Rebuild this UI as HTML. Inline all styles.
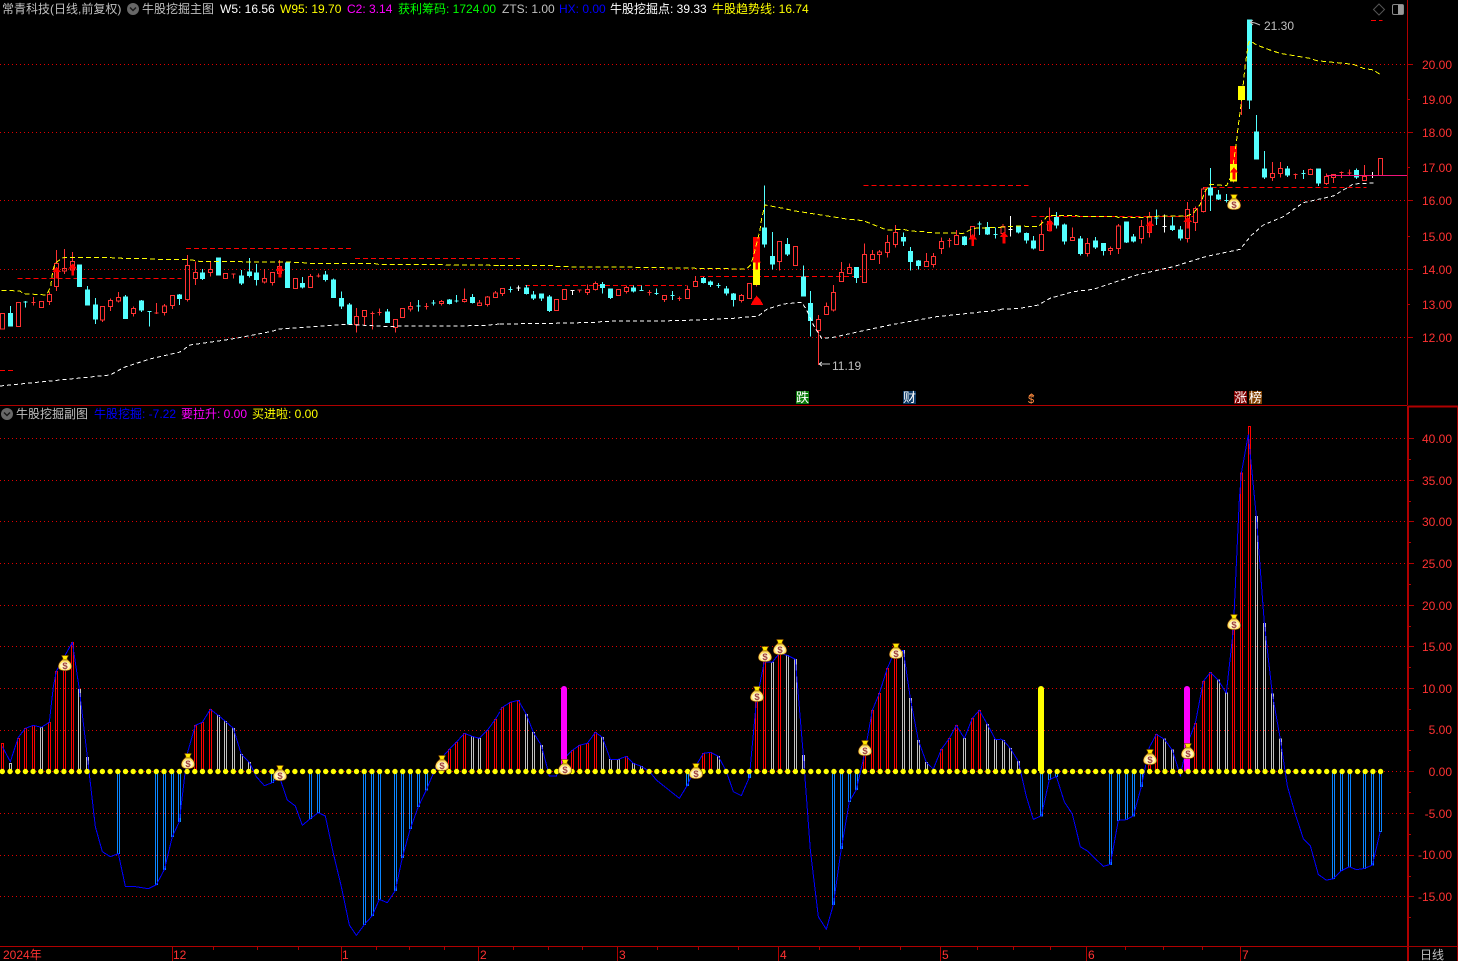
<!DOCTYPE html>
<html><head><meta charset="utf-8"><title>牛股挖掘</title>
<style>
html,body{margin:0;padding:0;background:#000;width:1458px;height:961px;overflow:hidden}
svg{position:absolute;left:0;top:0;display:block}
text{font-family:"Liberation Sans","WenQuanYi Zen Hei","Noto Sans CJK SC",sans-serif;font-size:12px}
.k path,.k polyline,.k line{vector-effect:non-scaling-stroke;stroke-width:1;shape-rendering:crispEdges}
.r{stroke:#ff3232;fill:none}
.c{stroke:#54ffff;fill:#54ffff}
.w{stroke:#fff;fill:#fff}
.y{stroke:#ffff00;fill:none;stroke-dasharray:5 3}
.v{stroke:#fff;fill:none;stroke-dasharray:4 3}
.d{stroke:#f00;fill:none;stroke-dasharray:5 3}
.l{stroke:#0000ff;fill:none}
.br{stroke:#f00;fill:none}
.bw{stroke:#c0c0c0;fill:none}
.bb{stroke:#0a84ff;fill:none}
.g line{stroke:#e00000;stroke-width:1;stroke-dasharray:1 3;shape-rendering:crispEdges}
.t{fill:#ff3232}
</style></head>
<body>
<svg width="1458" height="961" viewBox="0 0 1458 961" xmlns="http://www.w3.org/2000/svg">
<defs>
<symbol id="b" viewBox="0 0 14 16">
<path d="M3.500 .5h7L9 3.500l1 1.500H4l1-1.500z" fill="#ffe800" stroke="#6a3000" stroke-width=".6"/>
<path d="M4 5C1.500 7 .3 9.500 .3 11.500c0 3 3 4.200 6.700 4.200s6.700-1.200 6.700-4.200c0-2-1.200-4.500-3.700-6.500z" fill="#ffe060" stroke="#6a3000" stroke-width=".6"/>
<ellipse cx="7" cy="10.800" rx="5" ry="4" fill="#fff6c0"/>
<text x="7" y="14" text-anchor="middle" style="font-size:9.500px;font-weight:bold" fill="#a04040">$</text>
</symbol>
</defs>

<!-- grid -->
<g class="g">
<line x1="0" x2="1407" y1="64.500" y2="64.500"/><line x1="0" x2="1407" y1="132.500" y2="132.500"/><line x1="0" x2="1407" y1="200.500" y2="200.500"/><line x1="0" x2="1407" y1="269.500" y2="269.500"/><line x1="0" x2="1407" y1="337.500" y2="337.500"/>
<line x1="0" x2="1407" y1="438.500" y2="438.500"/><line x1="0" x2="1407" y1="480.500" y2="480.500"/><line x1="0" x2="1407" y1="521.500" y2="521.500"/><line x1="0" x2="1407" y1="563.500" y2="563.500"/><line x1="0" x2="1407" y1="605.500" y2="605.500"/><line x1="0" x2="1407" y1="646.500" y2="646.500"/><line x1="0" x2="1407" y1="688.500" y2="688.500"/><line x1="0" x2="1407" y1="730.500" y2="730.500"/><line x1="0" x2="1407" y1="771.500" y2="771.500"/><line x1="0" x2="1407" y1="813.500" y2="813.500"/><line x1="0" x2="1407" y1="855.500" y2="855.500"/><line x1="0" x2="1407" y1="896.500" y2="896.500"/>
</g>

<!-- main chart, left -->
<g class="k" transform="scale(.33333)">
<path class="d" d="M52 835H545M558 745H1055M1065 775H1500M0 1112H40"/>
<path class="r" d="M1 940h12V987h-12zM49 907h12V980h-12zM100 891V917M94 907h12M118 904h12V922h-12zM142 883h12V905h-12zM148 875V883M148 905V915M163 790h12V860h-12zM169 750V790M169 860V873M187 805h12V813h-12zM193 747V805M193 813V822M211 785h12V810h-12zM217 756V785M217 810V825M301 919h12V960h-12zM307 960V966M325 901h12V920h-12zM331 895V901M331 920V933M349 892h12V903h-12zM355 876V892M355 903V908M394 925h12V941h-12zM400 920V925M400 941V950M463 939h12M469 909V942M487 918h12V938h-12zM493 912V918M493 938V947M511 886h12V917h-12zM517 917V927M556 796h12V899h-12zM562 765V796M562 899V905M580 817h12V836h-12zM586 785V817M586 836V855M625 808h12V818h-12zM631 783V808M631 818V830M670 820h12V835h-12zM694 822h12M700 822V836M787 835h12V846h-12zM793 807V835M793 846V850M811 817h12V848h-12zM817 848V857M832 800h12V820h-12zM838 780V800M880 835h12V865h-12zM925 829h12V862h-12zM931 822V829M949 828h12M955 821V833M1063 949h12V974h-12zM1069 924V949M1069 974V998M1087 931h12V949h-12zM1093 949V975M1111 941h12M1117 934V988M1132 938h12M1138 925V947M1180 958h12V982h-12zM1186 982V998M1201 925h12V952h-12zM1225 919h12V927h-12zM1231 906V919M1231 927V935M1273 920h12M1279 909V929M1318 904h12V911h-12zM1324 900V904M1324 911V917M1387 898h12V904h-12zM1393 865V898M1393 904V908M1432 909h12V916h-12zM1438 900V909M1456 891h12V914h-12zM1462 888V891M1462 914V920M1480 879h12V892h-12zM1486 873V879"/>
<path class="c" d="M25 940h12V978h-12zM31 918V940M70 906h12M76 903V923M232 795h12V860h-12zM256 870h12V915h-12zM262 858V870M280 915h12V957h-12zM286 894V915M286 957V972M370 891h12V955h-12zM376 885V891M376 955V957M418 903h12V930h-12zM424 900V903M424 930V936M442 935h12M448 935V980M532 885h12V896h-12zM538 882V885M538 896V915M601 819h12V836h-12zM607 807V819M607 836V840M649 774h12V825h-12zM718 828h12V849h-12zM724 810V828M724 849V855M742 816h12V827h-12zM748 774V816M748 827V833M763 819h12V839h-12zM769 792V819M769 839V857M856 789h12V863h-12zM901 850h12V861h-12zM907 831V850M907 861V866M970 825h12V839h-12zM976 813V825M976 839V845M994 840h12V893h-12zM1000 835V840M1018 895h12V918h-12zM1024 874V895M1024 918V927M1042 915h12V972h-12zM1048 909V915M1156 936h12V968h-12zM1162 927V936M1249 918h12M1255 900V935M1294 909h12M1300 900V917M1342 900h12V911h-12zM1348 897V900M1348 911V914M1363 903h12M1369 885V908M1411 892h12V908h-12zM1417 882V892M1417 908V911"/>
<polyline class="y" points="5,871 60,873 70,881 140,885 152,860 158,815 165,790 185,775 195,772 310,772 370,775 440,776 470,778 560,778 590,782 600,785 700,785 900,787 925,790 1125,791 1135,793 1450,795 1500,797"/>
<polyline class="v" points="0,1158 90,1149 180,1140 270,1131 330,1125 375,1101 450,1077 540,1056 570,1035 690,1018 760,1005 820,993 835,987 1040,973 1150,979 1445,977 1500,972"/>
<path fill="#f00" d="M170 800l13 16h-9v20h-8v-20h-9zM218 790l13 16h-9v20h-8v-20h-9zM840 797l13 16h-9v20h-8v-20h-9z"/>
</g>

<!-- main chart, middle -->
<g class="k" transform="translate(500 0) scale(.33333)">
<path class="d" d="M75 856H560M600 830H1085M1090 556H1500M0 775H60"/>
<path class="r" d="M1 866h12V880h-12zM7 880V888M163 898h12V932h-12zM187 868h12V899h-12zM232 870h12M238 870V878M256 868h12V878h-12zM262 853V868M262 878V885M280 850h12V868h-12zM286 844V850M286 868V872M349 868h12V886h-12zM373 862h12V875h-12zM379 856V862M379 875V880M442 877h12M448 870V886M487 887h12V899h-12zM493 899V906M532 896h12M538 889V903M556 868h12V895h-12zM562 856V868M580 844h12V859h-12zM586 828V844M718 887h12V901h-12zM724 882V887M724 901V907M742 850h12V895h-12zM769 855V860M832 725h12V785h-12zM838 785V812M880 740h12V796h-12zM949 959h12V992h-12zM955 945V959M955 992V1095M973 920h12V944h-12zM979 907V920M994 877h12V930h-12zM1000 855V877M1000 930V935M1018 818h12V845h-12zM1024 786V818M1042 803h12V821h-12zM1048 790V803M1087 764h12V848h-12zM1093 730V764M1111 763h12V778h-12zM1117 750V763M1132 756h12V763h-12zM1138 750V756M1138 763V792M1156 727h12V757h-12zM1162 705V727M1162 757V772M1180 697h12V734h-12zM1186 675V697M1186 734V742M1273 785h12V800h-12zM1279 759V785M1294 769h12V794h-12zM1300 759V769M1300 794V803M1318 724h12V745h-12zM1324 712V724M1324 745V762M1342 722h12M1348 714V743M1363 706h12V734h-12zM1369 690V706M1411 680h12V710h-12z"/>
<path class="c" d="M25 868h12M31 860V878M73 864h12V881h-12zM79 855V864M79 881V884M94 885h12V894h-12zM100 873V885M100 894V900M118 882h12V894h-12zM124 894V903M142 891h12V932h-12zM148 885V891M148 932V936M301 853h12V863h-12zM307 846V853M307 863V881M325 867h12V893h-12zM331 865V867M331 893V897M394 864h12V873h-12zM400 857V864M400 873V878M418 872h12M424 856V873M463 880h12M469 865V885M511 886h12M517 873V900M604 835h12V848h-12zM610 831V835M610 848V851M625 846h12V854h-12zM631 841V846M631 854V861M649 857h12M655 849V864M673 867h12V879h-12zM679 858V867M679 879V887M694 882h12V899h-12zM700 879V882M700 899V920M787 684h12V732h-12zM793 556V684M793 732V743M811 769h12V792h-12zM817 696V769M817 792V809M856 733h12V762h-12zM862 714V733M862 762V768M904 831h12V888h-12zM910 796V831M925 910h12V962h-12zM931 873V910M931 962V1010M1063 802h12V832h-12zM1069 832V849M1204 712h12V723h-12zM1210 697V712M1210 723V738M1225 754h12V785h-12zM1231 741V754M1231 785V812M1249 783h12V797h-12zM1255 780V783M1255 797V809M1387 711h12V733h-12zM1393 708V711M1393 733V737M1432 672h12M1438 664V705M1456 683h12V702h-12zM1462 666V683M1462 702V705M1480 704h12M1486 683V716"/>
<path class="w" d="M49 864h12M55 857V873M211 871h12M217 871V885"/>
<path fill="#f00" d="M759 711h21v74h-21z"/>
<path fill="#ff0" d="M759 785h21v70h-21z"/>
<polyline class="y" points="0,797 160,797 165,800 350,801 600,805 740,807 752,795 760,770 780,690 785,655 795,615 850,625 880,632 1040,657 1090,662 1130,678 1160,690 1210,688 1230,693 1270,695 1290,698 1390,700 1420,685 1500,682"/>
<polyline class="v" points="0,972 160,970 290,967 310,964 540,962 700,955 775,948 800,928 850,912 905,907 920,930 940,975 965,1015 1000,1012 1090,992 1170,975 1310,950 1500,930"/>
<path fill="#f00" d="M770 772l14 16h-10v20h-8v-20h-10zM1418 702l13 16h-9v20h-8v-20h-9zM770 887l10 10 10 18h-38l10-18z"/>
</g>

<!-- main chart, right -->
<g class="k" transform="translate(1000 0) scale(.33333)">
<path class="d" d="M0 556H85M95 650H580M610 562H1100M1113 61H1147"/>
<path class="r" d="M3 680h12V700h-12zM9 672V680M118 703h12V752h-12zM124 660V703M142 665h12V692h-12zM148 622V665M211 712h12V722h-12zM217 682V712M256 730h12V761h-12zM262 714V730M262 761V770M325 745h12V751h-12zM331 739V745M331 751V765M349 678h12V745h-12zM355 672V678M355 745V762M418 679h12V716h-12zM424 660V679M424 716V731M442 650h12V697h-12zM448 636V650M448 697V713M556 628h12V716h-12zM562 606V628M562 716V728M580 625h12V668h-12zM586 620V625M586 668V693M604 567h12V635h-12zM610 561V567M610 635V638M724 300V345M700 545V548M811 520h12V533h-12zM817 486V520M817 533V543M835 505h12V521h-12zM841 486V505M841 521V533M880 524h12M886 520V537M925 508h12V523h-12zM931 505V508M973 529h12V551h-12zM979 520V529M979 551V555M994 524h12V533h-12zM1000 533V549M1018 517h12M1024 515V534M1042 519h12M1048 508V527M1087 530h12V542h-12zM1093 495V530M1135 475h12V526h-12z"/>
<path class="c" d="M49 678h12V696h-12zM55 676V678M55 696V701M73 700h12V720h-12zM79 697V700M79 720V731M94 723h12V744h-12zM100 708V723M100 744V749M163 652h12V675h-12zM169 636V652M169 675V686M187 675h12V723h-12zM193 670V675M193 723V734M235 717h12V760h-12zM241 708V717M241 760V767M280 723h12V741h-12zM286 711V723M286 741V747M304 730h12V752h-12zM310 752V767M373 666h12V726h-12zM379 726V729M394 711h12V723h-12zM400 702V711M400 723V728M463 654h12M469 628V675M511 678h12V688h-12zM517 651V678M517 688V693M535 690h12V714h-12zM541 678V690M541 714V722M625 564h12V585h-12zM631 504V564M631 585V633M649 585h12V597h-12zM655 570V585M655 597V600M673 601h12M679 582V608M763 396h12V477h-12zM769 345V396M787 507h12V531h-12zM793 453V507M793 531V537M856 507h12V525h-12zM862 498V507M862 525V531M904 520h12M910 510V537M949 507h12V549h-12zM955 505V507M955 549V558M1063 511h12V531h-12zM1069 505V511M1069 531V537"/>
<path class="w" d="M25 688h12M31 648V710M487 679h12M493 643V697M1117 516V534"/>
<path fill="#f00" d="M690 438h21v54h-21z"/>
<path fill="#ff0" d="M690 492h21v53h-21zM714 258h21v42h-21z"/>
<path class="c" d="M742 60h12V300h-12zM748 300V327"/>
<polyline class="y" points="0,682 50,678 115,680 130,665 140,650 155,646 230,647 240,650 350,650 355,653 440,652 480,648 560,648 580,640 600,615 615,575 630,553 680,557 695,525 710,420 715,375 725,300 735,200 745,130 750,122 770,135 810,150 840,160 930,175 950,182 1060,193 1090,205 1120,210 1140,223"/>
<polyline class="v" points="0,928 60,925 115,915 150,895 220,875 280,868 340,848 410,825 520,800 610,772 625,768 720,748 755,705 790,675 850,650 910,608 1000,588 1060,552 1130,548"/>
<path stroke="#f0147a" fill="none" d="M980 526H1222"/>
<path fill="#f00" d="M12 695l13 16h-9v20h-8v-20h-9zM150 658l13 16h-9v20h-8v-20h-9zM450 662l13 16h-9v20h-8v-20h-9zM563 650l13 16h-9v20h-8v-20h-9zM702 502l13 16h-9v20h-8v-20h-9z"/>
</g>

<!-- sub chart left -->
<g class="k" transform="translate(0 630) scale(.33333)">
<path class="br" d="M4 424V340h6V424M52 424V325h6V424M73 424V295h6V424M97 424V286h6V424M145 424V277h6V424M166 424V124h6V424M190 424V115h6V424M214 424V37h6V424M583 424V286h6V424M604 424V277h6V424M628 424V238h6V424M1345 424V358h6V424M1366 424V337h6V424M1390 424V310h6V424M1459 424V301h6V424M1483 424V268h6V424"/>
<path class="bw" d="M28 424V400h6V424M121 424V292h6V424M235 424V178h6V424M259 424V382h6V424M652 424V256h6V424M673 424V274h6V424M697 424V295h6V424M721 424V373h6V424M745 424V397h6V424M1414 424V319h6V424M1435 424V325h6V424"/>
<path class="bb" d="M352 428V671h6V428M466 428V764h6V428M490 428V719h6V428M514 428V620h6V428M535 428V575h6V428M814 428V458h6V428M928 428V566h6V428M952 428V548h6V428M1090 428V884h6V428M1114 428V857h6V428M1135 428V808h6V428M1183 428V782h6V428M1204 428V683h6V428M1228 428V596h6V428M1252 428V530h6V428M1276 428V480h6V428"/>
<polyline class="l" points="7,350 31,395 55,322 76,295 100,286 124,292 148,277 160,170 169,124 193,80 217,37 238,178 262,380 286,590 307,665 331,680 355,671 376,769 400,769 445,776 469,764 493,719 517,620 538,575 562,370 586,286 607,277 631,238 655,256 676,274 700,295 724,373 748,397 769,440 793,467 817,458 838,440 862,510 886,528 907,586 931,566 955,548 976,558 1000,670 1024,770 1048,885 1069,916 1093,884 1117,857 1138,808 1162,818 1186,782 1207,683 1231,596 1255,530 1279,480 1300,430 1324,385 1348,358 1369,337 1393,310 1417,319 1438,325 1462,301 1486,268 1500,245"/>
</g>

<!-- sub chart middle -->
<g class="k" transform="translate(500 630) scale(.33333)">
<path class="br" d="M4 424V232h6V424M28 424V217h6V424M52 424V211h6V424M214 424V361h6V424M235 424V346h6V424M259 424V340h6V424M283 424V307h6V424M376 424V379h6V424M607 424V370h6V424M628 424V367h6V424M766 424V215h6V424M790 424V95h6V424M835 424V70h6V424M1090 424V375h6V424M1114 424V241h6V424M1135 424V190h6V424M1159 424V115h6V424M1183 424V70h6V424M1321 424V358h6V424M1345 424V325h6V424M1366 424V286h6V424M1414 424V265h6V424M1435 424V241h6V424"/>
<path class="bw" d="M76 424V253h6V424M97 424V307h6V424M121 424V346h6V424M304 424V322h6V424M328 424V388h6V424M352 424V388h6V424M397 424V400h6V424M421 424V409h6V424M652 424V379h6V424M814 424V97h6V424M859 424V76h6V424M883 424V88h6V424M907 424V376h6V424M1207 424V62h6V424M1228 424V205h6V424M1252 424V331h6V424M1276 424V397h6V424M1390 424V325h6V424M1459 424V283h6V424M1483 424V328h6V424"/>
<path class="bb" d="M559 428V466h6V428M745 428V442h6V428M997 428V824h6V428M1021 428V656h6V428M1045 428V515h6V428M1066 428V479h6V428"/>
<polyline class="l" points="0,240 7,232 31,217 55,211 79,253 100,307 124,346 148,438 169,438 193,385 217,361 238,346 262,340 286,307 307,322 331,388 355,388 379,379 400,400 424,409 448,424 469,450 538,505 562,466 586,410 610,370 631,367 655,379 679,424 700,485 724,497 748,442 769,215 793,95 817,97 838,70 862,76 886,88 910,376 931,660 955,860 979,898 1000,824 1024,656 1048,515 1069,479 1093,375 1117,241 1138,190 1162,115 1186,60 1210,62 1231,205 1255,331 1279,397 1300,417 1324,358 1348,325 1369,286 1393,325 1417,265 1438,241 1462,283 1486,328 1500,328"/>
</g>
<path d="M561 771V689a3 3 0 0 1 6 0V771z" fill="#f0f"/>

<!-- sub chart right -->
<g class="k" transform="translate(1000 410) scale(.33333 .35137)">
<path class="br" d="M445 1028V1010h6V1028M466 1028V923h6V1028M583 1028V892h6V1028M607 1028V772h6V1028M628 1028V747h6V1028M697 1028V625h6V1028M721 1028V179h6V1028M745 1028V47h6V1028"/>
<path class="bw" d="M7 1028V940h6V1028M28 1028V963h6V1028M52 1028V1000h6V1028M490 1028V937h6V1028M514 1028V968h6V1028M652 1028V769h6V1028M676 1028V806h6V1028M766 1028V303h6V1028M790 1028V607h6V1028M814 1028V808h6V1028M838 1028V937h6V1028"/>
<path class="bb" d="M121 1032V1155h6V1032M145 1032V1052h6V1032M166 1032V1043h6V1032M328 1032V1293h6V1032M352 1032V1168h6V1032M376 1032V1166h6V1032M397 1032V1155h6V1032M421 1032V1072h6V1032M997 1032V1334h6V1032M1021 1032V1311h6V1032M1045 1032V1300h6V1032M1090 1032V1305h6V1032M1114 1032V1295h6V1032M1138 1032V1199h6V1032"/>
<polyline class="l" points="0,936 10,940 31,963 55,1000 79,1100 100,1165 124,1155 148,1052 169,1043 193,1115 217,1150 241,1243 262,1255 310,1299 331,1293 355,1168 379,1166 400,1155 424,1072 448,960 469,923 493,937 517,968 541,1040 562,950 586,892 610,772 631,747 655,769 679,806 700,625 718,255 724,180 745,70 769,303 793,607 817,808 841,937 862,1070 886,1150 910,1220 931,1240 955,1322 979,1338 1000,1334 1024,1311 1048,1300 1069,1308 1093,1305 1117,1295 1141,1199"/>
</g>
<path d="M1038 771V689a3 3 0 0 1 6 0V771z" fill="#ff0"/>
<path d="M1184 771V689a3 3 0 0 1 6 0V771z" fill="#f0f"/>

<!-- zero-line dots -->
<line x1="2.300" x2="1381" y1="771.500" y2="771.500" stroke="#ff0" stroke-width="5.400" stroke-linecap="round" stroke-dasharray="0 7.700"/>

<!-- money bags -->
<use href="#b" x="58" y="655" width="14" height="16"/><use href="#b" x="181" y="753" width="14" height="16"/><use href="#b" x="273" y="765" width="14" height="16"/><use href="#b" x="435" y="755" width="14" height="16"/><use href="#b" x="558" y="759" width="14" height="16"/><use href="#b" x="689" y="763" width="14" height="16"/><use href="#b" x="750" y="686" width="14" height="16"/><use href="#b" x="758" y="646" width="14" height="16"/><use href="#b" x="773" y="639" width="14" height="16"/><use href="#b" x="858" y="740" width="14" height="16"/><use href="#b" x="889" y="643" width="14" height="16"/><use href="#b" x="1143" y="749" width="14" height="16"/><use href="#b" x="1181" y="743" width="14" height="16"/><use href="#b" x="1227" y="614" width="14" height="16"/><use href="#b" x="1227" y="194" width="14" height="16"/>

<!-- frame -->
<g stroke="#b00000" fill="none" shape-rendering="crispEdges">
<path d="M0 405.500H1407M1407.500 0V405M0 946.500H1407" stroke-width="1"/>
<path d="M1407 406.500H1458M1408 406V961" stroke-width="2"/>
<path d="M1457.500 406V961M1407 946.500H1458" stroke-width="1" stroke="#a00000"/>
<path d="M1407 64.500h6M1407 99.500h3M1407 132.500h6M1407 167.500h3M1407 200.500h6M1407 236.500h3M1407 269.500h6M1407 304.500h3M1407 337.500h6M1408 438.500h6M1408 459.500h3M1408 480.500h6M1408 501.500h3M1408 521.500h6M1408 542.500h3M1408 563.500h6M1408 584.500h3M1408 605.500h6M1408 626.500h3M1408 646.500h6M1408 667.500h3M1408 688.500h6M1408 709.500h3M1408 730.500h6M1408 750.500h3M1408 771.500h6M1408 792.500h3M1408 813.500h6M1408 834.500h3M1408 855.500h6M1408 876.500h3M1408 896.500h6M1408 917.500h3"/>
<path d="M172.500 947V961M341.500 947V961M478.500 947V961M617.500 947V961M778.500 947V961M940.500 947V961M1086.500 947V961M1240.500 947V961M213.500 947v3M257.500 947v3M298.500 947v3M376.500 947v3M409.500 947v3M444.500 947v3M513.500 947v3M548.500 947v3M582.500 947v3M657.500 947v3M698.500 947v3M738.500 947v3M819.500 947v3M859.500 947v3M900.500 947v3M977.500 947v3M1013.500 947v3M1050.500 947v3M1125.500 947v3M1163.500 947v3M1202.500 947v3"/>
</g>

<!-- axis labels -->
<g class="t" text-anchor="end">
<text x="1452" y="69">20.00</text><text x="1452" y="104">19.00</text><text x="1452" y="137">18.00</text><text x="1452" y="172">17.00</text><text x="1452" y="205">16.00</text><text x="1452" y="241">15.00</text><text x="1452" y="274">14.00</text><text x="1452" y="309">13.00</text><text x="1452" y="342">12.00</text>
<text x="1452" y="443">40.00</text><text x="1452" y="485">35.00</text><text x="1452" y="526">30.00</text><text x="1452" y="568">25.00</text><text x="1452" y="610">20.00</text><text x="1452" y="651">15.00</text><text x="1452" y="693">10.00</text><text x="1452" y="734">5.00</text><text x="1452" y="776">0.00</text><text x="1452" y="818">-5.00</text><text x="1452" y="859">-10.00</text><text x="1452" y="901">-15.00</text>
</g>
<g class="t">
<text x="3" y="959">2024年</text><text x="173" y="959">12</text><text x="342" y="959">1</text><text x="480" y="959">2</text><text x="619" y="959">3</text><text x="780" y="959">4</text><text x="942" y="959">5</text><text x="1088" y="959">6</text><text x="1242" y="959">7</text>
</g>
<text x="1420" y="959" fill="#c0c0c0">日线</text>

<!-- header -->
<text x="2" y="13" fill="#c0c0c0">常青科技(日线,前复权)</text>
<g transform="translate(133 9)"><circle r="6" fill="#686868"/><path d="M-3-1.500 0 1.500 3-1.500" stroke="#1a1a1a" stroke-width="1.500" fill="none"/></g>
<text x="142" y="13" fill="#c0c0c0">牛股挖掘主图</text>
<text x="220" y="13" fill="#fff">W5: 16.56</text>
<text x="280" y="13" fill="#ff0">W95: 19.70</text>
<text x="347" y="13" fill="#f0f">C2: 3.14</text>
<text x="398" y="13" fill="#0f0">获利筹码: 1724.00</text>
<text x="502" y="13" fill="#c0c0c0">ZTS: 1.00</text>
<text x="559" y="13" fill="#00f">HX: 0.00</text>
<text x="610" y="13" fill="#fff">牛股挖掘点: 39.33</text>
<text x="712" y="13" fill="#ff0">牛股趋势线: 16.74</text>

<!-- top right icons -->
<path d="M1379 4l5.500 5.500-5.500 5.500-5.500-5.500z" fill="none" stroke="#555"/>
<rect x="1392.500" y="4.500" width="11" height="10" rx="1.500" fill="none" stroke="#888"/><rect x="1398" y="5" width="5" height="9" fill="#999"/>

<!-- sub header -->
<g transform="translate(7 414)"><circle r="6" fill="#686868"/><path d="M-3-1.500 0 1.500 3-1.500" stroke="#1a1a1a" stroke-width="1.500" fill="none"/></g>
<text x="16" y="418" fill="#c0c0c0">牛股挖掘副图</text>
<text x="94" y="418" fill="#00f">牛股挖掘: -7.22</text>
<text x="181" y="418" fill="#f0f">要拉升: 0.00</text>
<text x="252" y="418" fill="#ff0">买进啦: 0.00</text>

<!-- hi/lo labels -->
<path d="M1250 22l3-2M1250 22l3 3M1250 22l5 1 5 2" stroke="#c0c0c0" fill="none"/>
<text x="1264" y="30" fill="#c0c0c0">21.30</text>
<path d="M819 364h11M819 364l3-2M819 364l3 2" stroke="#c0c0c0" fill="none" shape-rendering="crispEdges"/>
<text x="832" y="370" fill="#c0c0c0">11.19</text>

<!-- tags -->
<rect x="796" y="391" width="13" height="13" fill="#0a7a0a"/><text x="796" y="402" fill="#fff" style="font-size:13px">跌</text>
<rect x="903" y="391" width="13" height="13" fill="#0c3a66"/><text x="903" y="402" fill="#fff" style="font-size:13px">财</text>
<text x="1028" y="403" fill="#ff8c40" style="font-size:11px">$</text><path d="M1029 396l2.500-2 2.500 2" stroke="#ff8c40" fill="none"/>
<rect x="1234" y="391" width="13" height="13" fill="#800000"/><text x="1234" y="402" fill="#fff" style="font-size:13px">涨</text>
<rect x="1249" y="391" width="13" height="13" fill="#804000"/><text x="1249" y="402" fill="#fff" style="font-size:13px">榜</text>
</svg>
</body></html>
